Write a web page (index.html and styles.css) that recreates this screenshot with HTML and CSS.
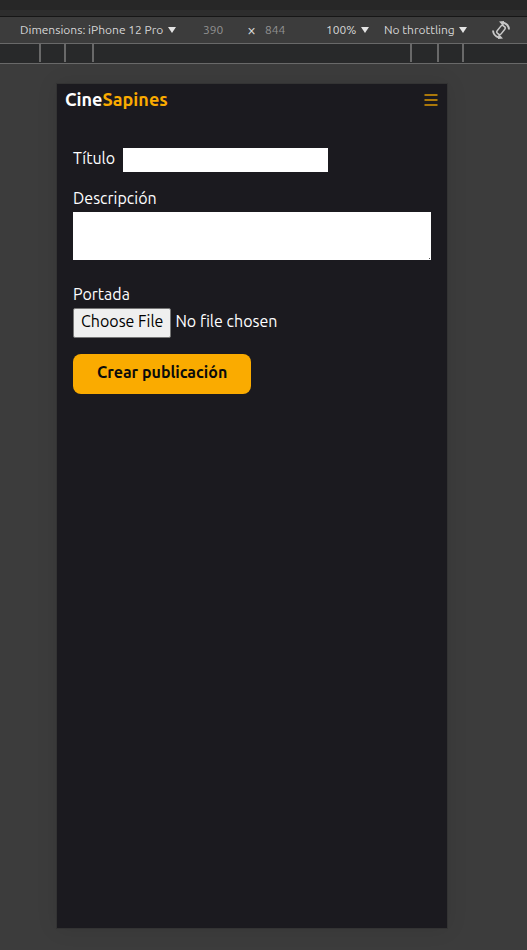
FILE: index.html
```html
<!DOCTYPE html>
<html lang="es">
<head>
<meta charset="utf-8">
<meta name="viewport" content="width=device-width, initial-scale=1">
<title>CineSapines</title>
<link rel="stylesheet" href="styles.css">
</head>
<body>
<div class="window-edge"></div>
<div class="toolbar">
  <span class="picker picker-device"><select aria-label="Device"><option>Dimensions: iPhone 12 Pro</option></select></span>
  <input class="size" type="text" value="390" aria-label="Width">
  <span class="times">×</span>
  <input class="size" type="text" value="844" aria-label="Height">
  <span class="picker picker-zoom"><select aria-label="Zoom"><option>100%</option></select></span>
  <span class="picker picker-network"><select aria-label="Throttling"><option>No throttling</option></select></span>
  <button class="rotate" type="button" aria-label="Rotate">
    <svg viewBox="0 0 18 18" width="18" height="18" fill="none" stroke="currentColor" stroke-width="1.5">
      <rect x="6.500" y="4.200" width="5" height="9.600" rx="1.800" transform="rotate(38 9 9)"/>
      <path stroke-width="1.900" d="M1 9.500C1.200 12.800 3.500 15.500 7 16.500M17 8.500C16.800 5.200 14.500 2.500 11 1.500"/>
      <path fill="currentColor" stroke="none" d="M6.500 12.500L11 17.500L6 18ZM11.500 5.500L7 .5L12 0Z"/>
    </svg>
  </button>
</div>
<div class="ruler"><i></i><i></i><i></i><i></i><i></i><i></i></div>
<div class="stage">
  <div class="device">
    <header class="header">
      <a class="brand" href="#">Cine<span>Sapines</span></a>
      <button class="menu" type="button" aria-label="Menú">
        <svg viewBox="0 0 14 12" width="14" height="12" stroke="currentColor" stroke-width="1.6"><path d="M.5 1h13M.5 6h13M.5 11h13"/></svg>
      </button>
    </header>
    <form class="form">
      <div class="field field-inline">
        <label for="titulo">Título</label>
        <input id="titulo" type="text">
      </div>
      <div class="field">
        <label for="descripcion">Descripción</label>
        <textarea id="descripcion" rows="2"></textarea>
      </div>
      <div class="field field-file">
        <label for="portada">Portada</label>
        <input id="portada" type="file">
      </div>
      <button class="submit" type="submit">Crear publicación</button>
    </form>
  </div>
</div>
</body>
</html>
```
FILE: styles.css
```css
* { box-sizing: border-box; }

body {
  display: flex;
  flex-direction: column;
  min-height: 100vh;
  margin: 0;
  background: #3c3c3c;
  color: #fff;
  font: 16px/24px Ubuntu, "Noto Sans", sans-serif;
}

button, input, select, textarea {
  margin: 0;
  padding: 0;
  border: 0;
  border-radius: 0;
  background: none;
  color: inherit;
  font: inherit;
}

.window-edge {
  height: 17px;
  border-bottom: 1px solid #161616;
  background: linear-gradient(#272727 10px, #2d2d2d 10px);
}

.toolbar {
  display: flex;
  align-items: center;
  height: 27px;
  padding: 0 17px 0 20px;
  border-bottom: 1px solid #696969;
  color: #d6d6d6;
  font-size: 12px;
  line-height: 16px;
}

.picker {
  display: flex;
  align-items: center;
  gap: 4px;
}

.picker::after {
  content: "";
  border: 4px solid transparent;
  border-top: 6px solid #e4e4e4;
  border-bottom: 0;
}

.picker select { appearance: none; }
.picker-device { margin-right: 27px; }
.picker-zoom { margin: 0 15px 0 auto; }

.size {
  width: 24px;
  color: #929292;
}

.times {
  margin: 0 9px 0 20px;
  font-size: 16px;
}

.rotate {
  height: 18px;
  margin-left: 25px;
  color: #c8c8c8;
}

.rotate svg, .menu svg { display: block; }

.ruler {
  display: grid;
  grid-template-columns: 41px 25px 28px 1fr 27px 25px 63px;
  height: 20px;
  padding-bottom: 1px;
  border-bottom: 1px solid #696969;
  background: #28292a;
}

.ruler i { border-right: 2px solid #696969; }

.stage {
  display: flex;
  flex: 1;
  padding: 20px 80px 22px 57px;
}

.device {
  flex: 1;
  min-width: 0;
  background: #1b1a1f;
  box-shadow: 0 0 0 1px #333, 0 0 20px rgba(0, 0, 0, .1);
}

.header {
  display: flex;
  align-items: center;
  justify-content: space-between;
  height: 32px;
  padding: 0 9px 0 8px;
}

.brand {
  padding-bottom: 2px;
  color: #fff;
  font-size: 18px;
  font-weight: 700;
  text-decoration: none;
}

.brand span { color: #faab00; }
.menu { color: #dc9804; }

.form { padding: 32px 16px; }

.field { margin-bottom: 16px; }

.field-inline {
  display: flex;
  gap: 8px;
}

.field-inline input {
  width: 205px;
  height: 24px;
  background: #fff;
  color: #111;
}

.field label {
  display: block;
  padding-bottom: 4px;
  line-height: 20px;
}

.field textarea {
  display: block;
  width: 100%;
  height: 48px;
  margin-bottom: 24px;
  background: linear-gradient(#555, #555) right 1px bottom 1px / 1px 1px no-repeat #fff;
  color: #111;
  resize: none;
}

.field-file input {
  display: block;
  height: 30px;
}

.field-file ::file-selector-button {
  height: 30px;
  margin: 0 4px 0 0;
  padding: 0 7px 4px;
  border: 1px solid #767676;
  border-radius: 2px;
  background: #efefef;
  color: #000;
  font: inherit;
}

.submit {
  height: 40px;
  padding: 0 24px 4px;
  border-radius: 8px;
  background: #faab00;
  color: #0b0b0b;
  font-weight: 700;
}
```
